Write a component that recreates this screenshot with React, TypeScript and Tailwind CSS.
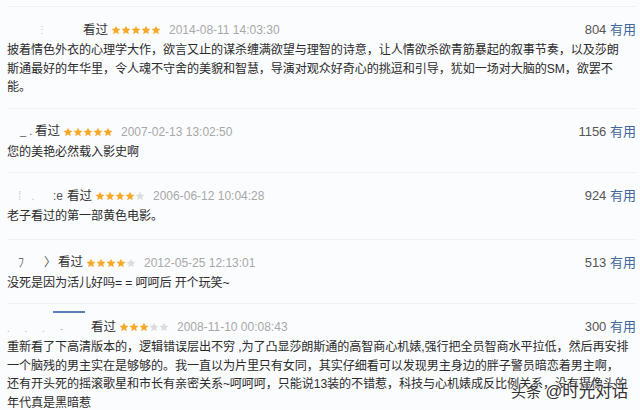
import React from 'react';

const font = { fontFamily: '"Liberation Sans", "Noto Sans CJK SC", sans-serif' };

function Stars({ n }: { n: number }) {
  return (
    <span className="flex items-center">
      {[0, 1, 2, 3, 4].map((i) => (
        <svg key={i} width="10" height="10" viewBox="0 0 24 24">
          <polygon
            points="12,1.5 15.1,8.6 22.8,9.3 17,14.4 18.7,22 12,18 5.3,22 7,14.4 1.2,9.3 8.9,8.6"
            fill={i < n ? '#f6a828' : '#dcdcdc'}
          />
        </svg>
      ))}
    </span>
  );
}

type Review = {
  user: React.ReactNode;
  stars: number;
  date: string;
  useful: string;
  lines: string[];
};

const reviews: Review[] = [
  {
    user: (
      <span className="w-[76px] flex pl-[30px] text-[#c8ccd2] text-[10px] leading-none">⋮</span>
    ),
    stars: 5,
    date: '2014-08-11 14:03:30',
    useful: '804',
    lines: [
      '披着情色外衣的心理学大作，欲言又止的谋杀缠满欲望与理智的诗意，让人情欲杀欲青筋暴起的叙事节奏，以及莎朗',
      '斯通最好的年华里，令人魂不守舍的美貌和智慧，导演对观众好奇心的挑逗和引导，犹如一场对大脑的SM，欲罢不',
      '能。',
    ],
  },
  {
    user: <span className="w-[28px] pl-[13px] text-[#555] text-[11px]">_ .</span>,
    stars: 5,
    date: '2007-02-13 13:02:50',
    useful: '1156',
    lines: ['您的美艳必然载入影史啊'],
  },
  {
    user: (
      <span className="w-[60px] flex items-center pl-[11px] text-[#999] text-[12px]">
        <span className="text-[#ccc]">⁞</span>
        <span className="ml-[10px] text-[#ccc]">.</span>
        <span className="ml-auto mr-[4px] text-[#555]">:e</span>
      </span>
    ),
    stars: 4,
    date: '2006-06-12 10:04:28',
    useful: '924',
    lines: ['老子看过的第一部黄色电影。'],
  },
  {
    user: (
      <span className="w-[51px] flex items-center pl-[11px] text-[#777] text-[12px]">
        <span>ﾌ</span>
        <span className="ml-auto mr-[2px] text-[#555]">〉</span>
      </span>
    ),
    stars: 4,
    date: '2012-05-25 12:13:01',
    useful: '513',
    lines: ['没死是因为活儿好吗= = 呵呵后 开个玩笑~'],
  },
  {
    user: (
      <span className="w-[84px] relative h-[20px] text-[#bbb] text-[10px]">
        <span className="absolute left-[46px] -top-[6px] w-[32px] h-[2px] bg-[#5b7fb8]" />
        <span className="absolute left-[0px] top-[4px] tracking-[6px]">. . . -</span>
      </span>
    ),
    stars: 3,
    date: '2008-11-10 00:08:43',
    useful: '300',
    lines: [
      '重新看了下高清版本的，逻辑错误层出不穷 ,为了凸显莎朗斯通的高智商心机婊,强行把全员智商水平拉低，然后再安排',
      '一个脑残的男主实在是够够的。我一直以为片里只有女同，其实仔细看可以发现男主身边的胖子警员暗恋着男主啊，',
      '还有开头死的摇滚歌星和市长有亲密关系~呵呵呵，只能说13装的不错惹，科技与心机婊成反比例关系，没有摄像头的',
      '年代真是黑暗惹',
    ],
  },
];

export default function App() {
  return (
    <div className="w-[640px] h-[410px] overflow-hidden bg-[#fbfcfe] relative" style={font}>
      <div className="ml-[7px] w-[629px] pt-[6px]">
        {reviews.map((r, idx) => (
          <div
            key={idx}
            className={`border-t border-[#edf0f4] pt-[13px] ${idx === 2 ? 'pb-[13px]' : 'pb-[11px]'}`}
          >
            <div className="flex items-center h-[20px] text-[12.5px]">
              {r.user}
              <span className="text-[#333]">看过</span>
              <span className="ml-[3px]">
                <Stars n={r.stars} />
              </span>
              <span className="ml-[8px] text-[#a8a8a8] text-[12px]">{r.date}</span>
              <span className="ml-auto text-[13px] text-[#555]">
                {r.useful} <span className="text-[#40679c]">有用</span>
              </span>
            </div>
            <div className="mt-px text-[12.1px] tracking-[-0.1px] leading-[18.5px] text-[#2b2b2b]">
              {r.lines.map((l, i) => (
                <div key={i} className="whitespace-nowrap">
                  {l}
                </div>
              ))}
            </div>
          </div>
        ))}
      </div>

      {/* watermark */}
      <div className="absolute left-[511px] top-[378px] text-[16.5px] leading-[26px] text-[#333] whitespace-nowrap [text-shadow:0_0_2px_#fff,0_0_2px_#fff]">
        <span className="text-[15px]">头条</span> @时光对话
      </div>
    </div>
  );
}
